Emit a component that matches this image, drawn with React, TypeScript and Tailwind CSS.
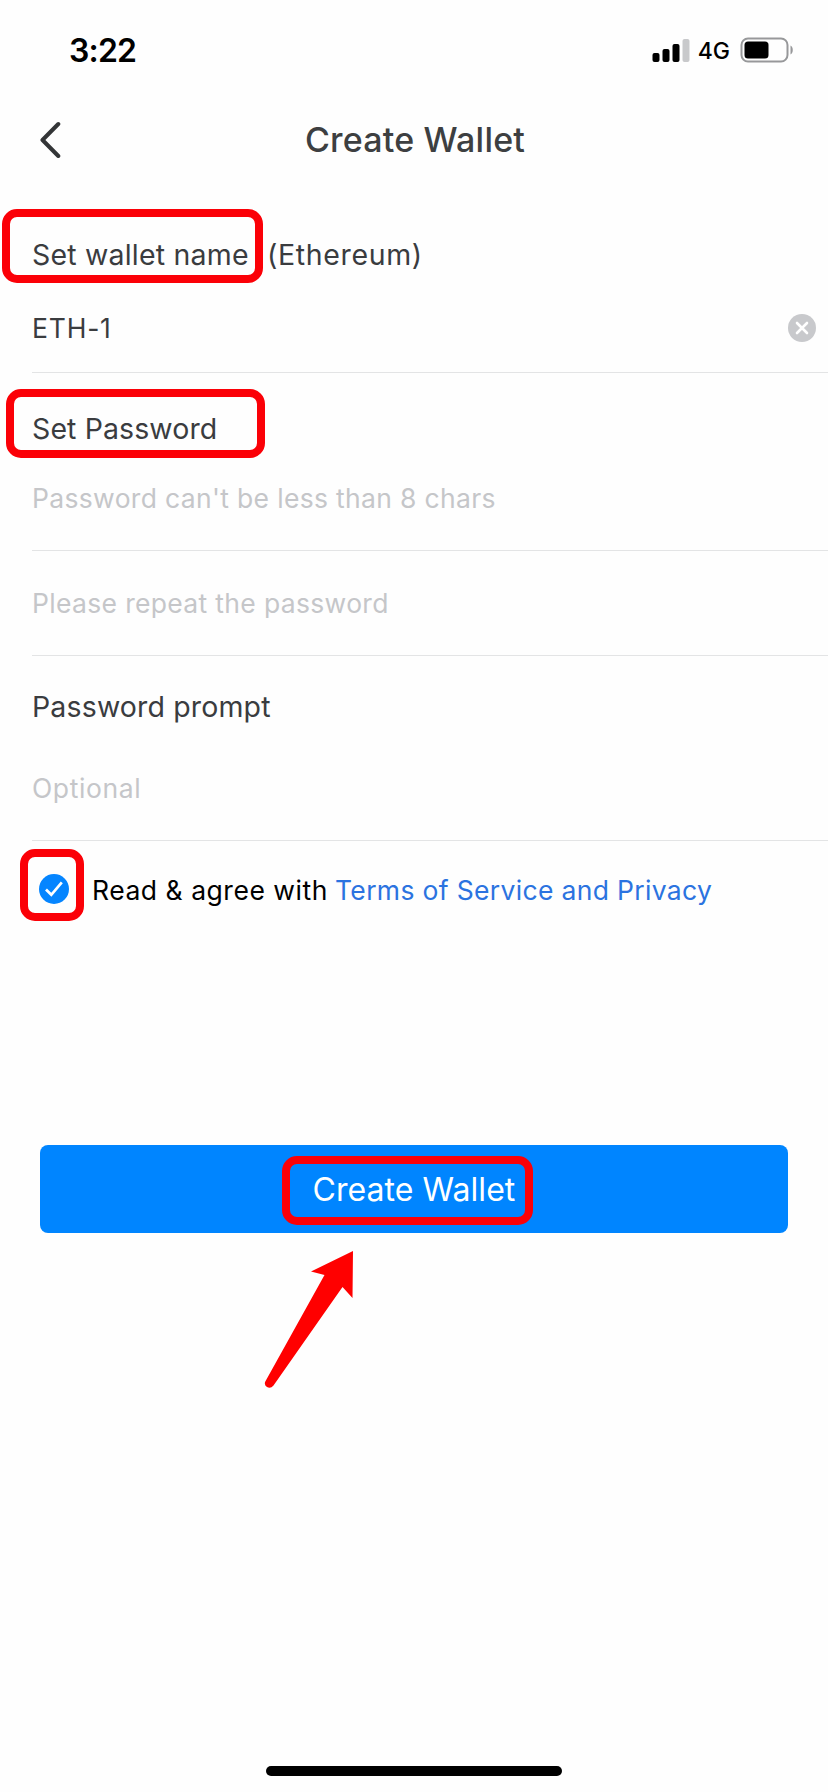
function StatusBar() {
  return (
    <div className="flex h-[98px] items-center pt-[1px] pr-[34px] pl-[69px] text-black">
      <span className="pt-[2px] text-[32px] leading-none font-semibold tracking-[-0.8px]">3:22</span>
      <svg className="ml-auto h-6 w-[38px]" viewBox="0 0 38 24">
        <rect x="0.5" y="15" width="7" height="9" rx="2" />
        <rect x="10.5" y="11" width="7" height="13" rx="2" />
        <rect x="20.5" y="6" width="7" height="18" rx="2" />
        <rect x="30.5" y="1" width="7" height="23" rx="2" fill="#c8c9cb" />
      </svg>
      <span className="ml-[8px] pt-[3px] text-[23px] leading-none font-medium">4G</span>
      <svg className="ml-[10px] h-[26px] w-[54px]" viewBox="0 0 54 26">
        <rect x="1.5" y="1.5" width="46" height="23" rx="6.5" fill="none" stroke="#97989a" strokeWidth="2" />
        <rect x="4.5" y="4.5" width="24" height="17" rx="3.5" />
        <path d="M50.5 8.5c3 1 3 8 0 9z" fill="#97989a" />
      </svg>
    </div>
  );
}

function Highlight({ className }: { className: string }) {
  return <span className={`pointer-events-none absolute rounded-[15px] border-8 border-[#fb0007] ${className}`} />;
}

const rowBase = "ml-8 flex items-center border-b border-[#e3e4e5] text-[26.5px] leading-none";

export default function App() {
  return (
    <main className="flex h-[1792px] w-[828px] flex-col overflow-hidden bg-[#fefefe] font-['Inter','Liberation_Sans',sans-serif] whitespace-nowrap text-[#3a3c3f]">
      <StatusBar />
      <header className="grid h-[82px] grid-cols-[80px_1fr_80px] items-center">
        <svg className="ml-[38px] h-[38px] w-6" viewBox="0 0 24 38" fill="none" stroke="#333537" strokeWidth="4" strokeLinecap="round" strokeLinejoin="round">
          <path d="M20.3 4L4.5 20L20.3 36" />
        </svg>
        <h1 className="pt-[2px] pl-[2px] text-center text-[34px] leading-none font-medium tracking-[0.2px] text-[#3d3f41]">Create Wallet</h1>
      </header>

      <section className="mt-[44px]">
        <div className="relative flex h-[60px] items-center pl-8 text-[28.5px] leading-none">
          <span className="w-[235px] pt-[2px] tracking-[0.2px]">Set wallet name</span>
          <span className="pt-[2px] tracking-[0.65px]">(Ethereum)</span>
          <Highlight className="-top-[15px] left-[2px] h-[74px] w-[261px]" />
        </div>
        <div className={`${rowBase} h-[89px] justify-between pr-3`}>
          <span className="tracking-[0.8px]">ETH-1</span>
          <svg className="h-7 w-7" viewBox="0 0 28 28">
            <circle cx="14" cy="14" r="14" fill="#c8c9cc" />
            <path d="M9 9l10 10M19 9L9 19" stroke="#fff" strokeWidth="2.6" strokeLinecap="round" />
          </svg>
        </div>
      </section>

      <section>
        <div className="relative flex h-[112px] items-center pl-8 text-[28.5px] leading-none">
          <span className="tracking-[0.1px]">Set Password</span>
          <Highlight className="top-[16px] left-[6px] h-[69px] w-[259px]" />
        </div>
        <div className={`${rowBase} h-[66px] pb-[39px] text-[#c5c6c9]`}>
          <span className="tracking-[0.33px]">Password can't be less than 8 chars</span>
        </div>
        <div className={`${rowBase} h-[105px] text-[#c5c6c9]`}>
          <span className="tracking-[0.33px]">Please repeat the password</span>
        </div>
      </section>

      <section>
        <div className="flex h-[101px] items-center pl-8 text-[28.5px] leading-none">
          <span className="pt-[2px] tracking-[0.15px]">Password prompt</span>
        </div>
        <div className={`${rowBase} h-[84px] pb-[21px] text-[#c5c6c9]`}>
          <span className="tracking-[0.6px]">Optional</span>
        </div>
      </section>

      <div className="relative flex h-[99px] items-center pl-[39px] text-[26.5px] leading-none">
        <svg className="mb-[3px] h-[30px] w-[30px]" viewBox="0 0 30 30">
          <circle cx="15" cy="15" r="15" fill="#0585ff" />
          <path d="M7 15.5l5.3 5.3L22.8 8.3" fill="none" stroke="#fff" strokeWidth="2.7" />
        </svg>
        <span className="ml-[23px] w-[243px] tracking-[0.53px] text-black">Read &amp; agree with</span>
        <a className="tracking-[0.33px] text-[#2b73e0]">Terms of Service and Privacy</a>
        <Highlight className="top-[8px] left-[19.5px] h-[72px] w-[64.5px]" />
      </div>

      <button className="relative mx-10 mt-[205px] flex h-[88px] shrink-0 items-center justify-center rounded-[8px] bg-[#0085ff] pt-[2px] text-[32px] leading-none tracking-[0.05px] text-white">
        Create Wallet
        <Highlight className="top-[11px] left-[242px] h-[69px] w-[251px]" />
      </button>

      <svg className="mt-[16px] ml-[260px] h-[144px] w-[100px]" viewBox="0 0 100 144" fill="#ff0000">
        <path d="M93 2L51 22.5L64.5 26L5.3 132.5Q3.8 136 7 138Q10.5 140 13.5 136.5L82.5 38L92.5 49Z" />
      </svg>

      <div className="mx-auto mt-auto mb-[16px] h-[10px] w-[296px] rounded-full bg-black" />
    </main>
  );
}
